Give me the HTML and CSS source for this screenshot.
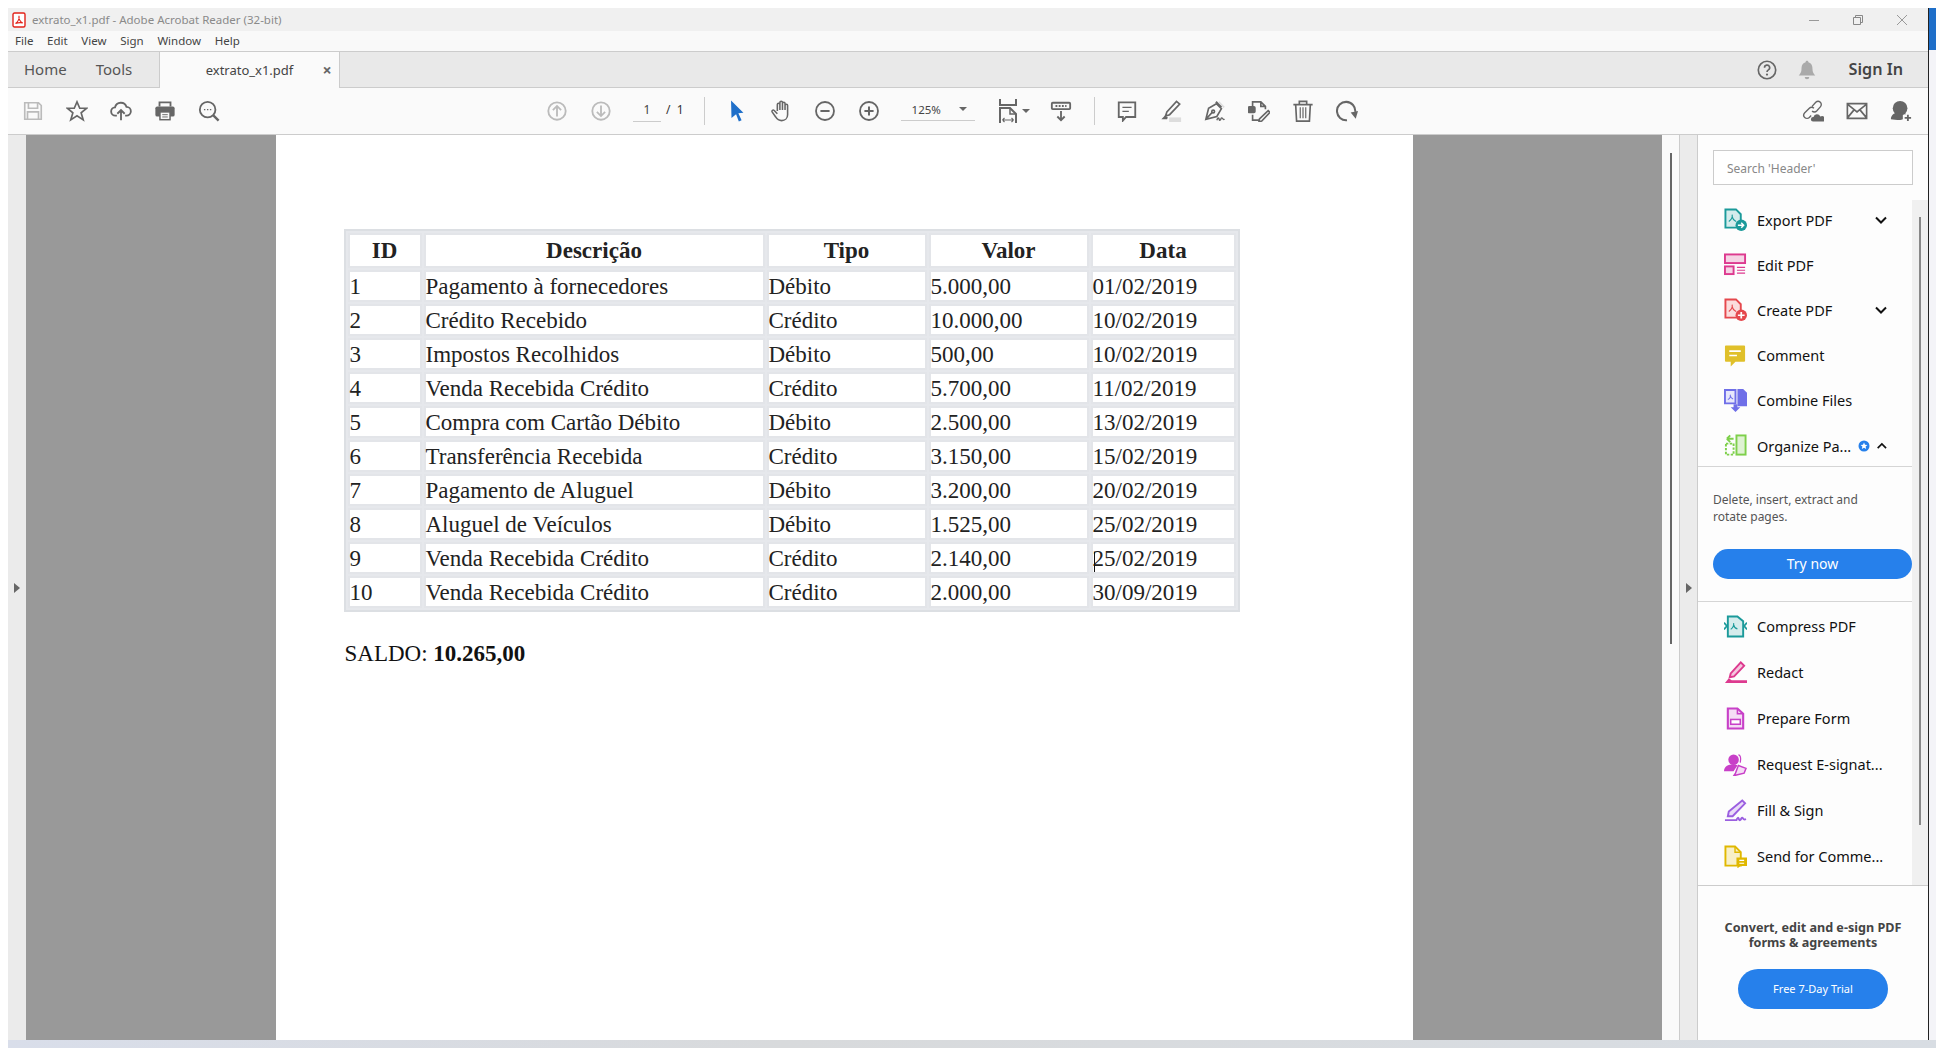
FILE: index.html
```html
<!DOCTYPE html>
<html lang="pt">
  <head>
    <meta charset="UTF-8" />
    <meta name="viewport" content="width=device-width, initial-scale=1.0" />
    <title>extrato_x1.pdf - Adobe Acrobat Reader</title>
    <link rel="stylesheet" href="styles.css">
  </head>
  <body>
    <div class="desk">
      <div class="window">
        <div class="titlebar">
          <svg class="app-icon" viewBox="0 0 14 16"><rect x="1" y="1" width="12" height="14" rx="1.5" fill="#fff" stroke="#e2231a" stroke-width="1.4"/><path d="M3.5 11.5C6 10 7.6 6.5 7 4c-.6 2.5 1 6 3.800 7-2-.6-4.800-.4-7.300.5z" fill="none" stroke="#e2231a" stroke-width="1.100"/></svg>
          <span class="title-text">extrato_x1.pdf - Adobe Acrobat Reader (32-bit)</span>
          <div class="win-btns">
            <svg viewBox="0 0 12 12"><path d="M1 6.500h10" stroke="#999" fill="none"/></svg>
            <svg viewBox="0 0 12 12"><path d="M1.500 3.500h7v7h-7zM3.500 3.500v-2h7v7h-2" stroke="#888" fill="none"/></svg>
            <svg viewBox="0 0 12 12"><path d="M1 1l10 10M11 1L1 11" stroke="#999" fill="none"/></svg>
          </div>
        </div>

        <div class="menubar">
          <span>File</span><span>Edit</span><span>View</span><span>Sign</span><span>Window</span><span>Help</span>
        </div>

        <div class="tabbar">
          <span class="tab-link home">Home</span>
          <span class="tab-link tools">Tools</span>
          <div class="tab-active">
            <span class="tab-name">extrato_x1.pdf</span>
            <span class="tab-close">×</span>
          </div>
          <div class="tab-right">
            <svg class="ico" viewBox="0 0 24 24"><circle cx="12" cy="12" r="9.500" fill="none" stroke="#666" stroke-width="1.800"/><path d="M9.300 9.500a2.800 2.800 0 1 1 4.200 2.400c-1 .6-1.500 1.100-1.500 2.300" fill="none" stroke="#666" stroke-width="1.800"/><circle cx="12" cy="17" r="1.200" fill="#666"/></svg>
            <svg class="ico bell" viewBox="0 0 24 24"><path d="M12 2c1 0 1.500.7 1.500 1.500C17 4.500 18 7.500 18 11c0 3 1 5 3 7H3c2-2 3-4 3-7 0-3.500 1-6.500 4.500-7.500C10.500 2.700 11 2 12 2zM9.500 19.500h5A2.500 2.500 0 0 1 9.500 19.500z" fill="#aaa"/></svg>
            <span class="sign-in">Sign In</span>
          </div>
        </div>

        <div class="toolbar">
          <span class="tool"><svg class="ico" viewBox="0 0 24 24" fill="none" stroke="#bbb" stroke-width="1.800"><path d="M3 3h15l3 3v15H3zM7 3v6h10V3M6 21v-8h12v8"/></svg></span>
          <span class="tool"><svg class="ico" viewBox="0 0 24 24" fill="none" stroke="#666" stroke-width="1.800"><path d="M12 2l3 7h7.500l-6 5 2.300 7.700L12 17.200l-6.800 4.500L7.500 14l-6-5H9z"/></svg></span>
          <span class="tool"><svg class="ico" viewBox="0 0 24 24" fill="none" stroke="#666" stroke-width="2"><path d="M7.500 17H6a4.500 4.500 0 0 1-.5-9A6.500 6.500 0 0 1 18 7.500a4.700 4.700 0 0 1 0 9.500h-1.500M12 22V11.500M8 15l4-4 4 4"/></svg></span>
          <span class="tool"><svg class="ico" viewBox="0 0 24 24"><path d="M6 7V2.500h12V7" fill="none" stroke="#666" stroke-width="2"/><rect x="1.500" y="7" width="21" height="11" rx="2" fill="#666"/><rect x="6.500" y="13" width="11" height="8.500" fill="#fafafa" stroke="#666" stroke-width="1.600"/><path d="M9 16h6M9 18.500h6" stroke="#666"/></svg></span>
          <span class="tool"><svg class="ico" viewBox="0 0 24 24" fill="none" stroke="#666" stroke-width="2"><circle cx="10.500" cy="10.500" r="8.500"/><path d="M16.500 16.500l6 6" stroke-width="2.600"/><path d="M6.500 10.500h1.500M9.800 10.500h1.500M13 10.500h1.500" stroke-width="1.600"/></svg></span>

          <span class="tool nav-first"><svg class="ico" viewBox="0 0 24 24" fill="none" stroke="#bbb" stroke-width="2"><circle cx="12" cy="12" r="9.500"/><path d="M12 18V6.500M7.500 11L12 6.500l4.500 4.500"/></svg></span>
          <span class="tool"><svg class="ico" viewBox="0 0 24 24" fill="none" stroke="#bbb" stroke-width="2"><circle cx="12" cy="12" r="9.500"/><path d="M12 6v11.500M7.500 13l4.500 4.500 4.500-4.500"/></svg></span>
          <span class="page-num">1</span>
          <span class="page-total">/ &nbsp;1</span>
          <span class="tool-sep first"></span>
          <span class="tool"><svg class="ico" viewBox="0 0 24 24"><path d="M5.500 0.500L19 14l-5.500.5L17 22l-3 1.500-3-8L6 19.500z" fill="#1f6fc9"/></svg></span>
          <span class="tool"><svg class="ico" viewBox="0 0 24 24" fill="none" stroke="#666" stroke-width="1.700"><path d="M8 12V5a1.400 1.400 0 0 1 2.800 0v6M10.800 11V2.800a1.400 1.400 0 0 1 2.800 0V11M13.600 11V3.800a1.400 1.400 0 0 1 2.800 0V11M16.400 11V6a1.400 1.400 0 0 1 2.800 0v10c0 4-3 6.500-6.500 6.500-3.200 0-5-1.500-6.500-4L2.300 13c-.8-1.300 1-2.800 2.300-1.600L8 15"/></svg></span>
          <span class="tool"><svg class="ico" viewBox="0 0 24 24" fill="none" stroke="#666" stroke-width="2"><circle cx="12" cy="12" r="9.800"/><path d="M7 12h10" stroke-width="2.200"/></svg></span>
          <span class="tool"><svg class="ico" viewBox="0 0 24 24" fill="none" stroke="#666" stroke-width="2"><circle cx="12" cy="12" r="9.800"/><path d="M7 12h10M12 7v10" stroke-width="2.200"/></svg></span>
          <span class="zoom-box"><span class="zoom-val">125%</span><span class="caret"></span></span>
          <span class="fit-tool">
            <svg class="fit-ico" viewBox="0 0 18 24" fill="none" stroke="#666" stroke-width="2"><path d="M1 0v6h16V0M1 24V9h10l6 6v9"/><path d="M11 9v6h6" stroke-width="1.500"/><path d="M3.500 21h11M3.500 21l2-2M3.500 21l2 2M14.500 21l-2-2M14.500 21l-2 2" stroke-width="1.100"/></svg>
            <span class="caret"></span>
          </span>
          <span class="tool dl-tool"><svg class="ico" viewBox="0 0 24 24" fill="none" stroke="#666" stroke-width="2"><rect x="2" y="3" width="20" height="7" rx="1"/><path d="M6 6.500h12" stroke-dasharray="2 1.500"/><path d="M12 12v10M8 18l4 4 4-4"/></svg></span>
          <span class="tool-sep"></span>
          <span class="tool"><svg class="ico" viewBox="0 0 24 24" fill="none" stroke="#666" stroke-width="2"><path d="M3 2.500h18v16H11l-3.500 4v-4H3z"/><path d="M7 8h10M7 12.500h7" stroke-width="1.400"/></svg></span>
          <span class="tool"><svg class="ico" viewBox="0 0 24 24"><path d="M21.500 4.500L18 1.500 7.500 13 6 17.500l4.500-1.500z" fill="none" stroke="#666" stroke-width="1.800"/><path d="M1.500 21l4-4 3 2.200-.8 1.800z" fill="#666"/><path d="M10 19h13v5H10z" fill="#ddd"/></svg></span>
          <span class="tool"><svg class="ico" viewBox="0 0 24 24" fill="none" stroke="#666" stroke-width="1.800"><path d="M13 2l6 6" stroke-width="2.200"/><path d="M13.500 4L5 9 2 21l12-3 5-8.500zM2.500 20.500L9 13.500"/><circle cx="10" cy="12.500" r="1.500"/><path d="M14 22c1-3 2-3 2.500-1s1.500 1 2-.5 1.500-1 2 0 1 1 2 .5" stroke-width="1.500"/><path d="M16 2l6 6" stroke="#ddd"/></svg></span>
          <span class="tool"><svg class="ico" viewBox="0 0 24 24" fill="none" stroke="#666" stroke-width="1.800"><path d="M5 7V2h9l5 5v3M14 2v5h5M5 16v6h7"/><rect x="0.500" y="7.500" width="7" height="6" rx="1" fill="#666"/><path d="M22 11.500l2 2L15 23l-3 .5.500-3z"/></svg></span>
          <span class="tool"><svg class="ico" viewBox="0 0 24 24" fill="none" stroke="#666" stroke-width="1.800"><path d="M1.500 5h21M8 5V1.500h8V5M4 5l1 18h14l1-18"/><path d="M9 8v12M12 8v12M15 8v12" stroke-width="1.300"/></svg></span>
          <span class="tool"><svg class="ico" viewBox="0 0 24 24" fill="none" stroke="#666" stroke-width="2.200"><path d="M12 22A10 10 0 1 1 21 13"/><path d="M16 13.500l5.500 7 2.500-8.500z" fill="#666" stroke="none"/></svg></span>
          <div class="tool-right">
            <span class="tool"><svg class="ico" viewBox="0 0 24 24" fill="none" stroke="#666" stroke-width="1.500"><path d="M11 7l4-4.500a3.500 3.500 0 0 1 5 5L16 12a3.500 3.500 0 0 1-5 0M13 9a3.500 3.500 0 0 0-5 0l-5 5a3.500 3.500 0 0 0 5 5l2-2"/><path d="M12 23.500a2.500 2.500 0 0 1 .5-5 4 4 0 0 1 7.500-.5 2.900 2.900 0 0 1 3.500 5.500z" fill="#666" stroke="none"/></svg></span>
            <span class="tool"><svg class="ico" viewBox="0 0 24 24" fill="none" stroke="#666" stroke-width="1.800"><path d="M1.500 4h21v16h-21zM1.500 4.500L12 13l10.500-8.500M1.500 19.500L9 10.500M22.500 19.500L15 10.500"/></svg></span>
            <span class="tool"><svg class="ico" viewBox="0 0 24 24"><circle cx="11" cy="9" r="8" fill="#666"/><path d="M1 21c0-4 3-6.500 6-7h8c1 .3 2 .8 2.500 1.500H14V21c-1 .5-2 .8-3 .8-4 0-7.500-.2-10-.8z" fill="#666"/><path d="M19.500 16v7M16 19.500h7" stroke="#666" stroke-width="2" fill="none"/></svg></span>
          </div>
        </div>

        <div class="main">
          <div class="side-strip"><span class="arrow-r"></span></div>
          <div class="doc-area">
            <div class="page">
              <table class="extrato">
                <thead>
                  <tr><th class="c-id">ID</th><th class="c-desc">Descrição</th><th class="c-tipo">Tipo</th><th class="c-valor">Valor</th><th class="c-data">Data</th></tr>
                </thead>
                <tbody>
                  <tr><td>1</td><td>Pagamento à fornecedores</td><td>Débito</td><td>5.000,00</td><td>01/02/2019</td></tr>
                  <tr><td>2</td><td>Crédito Recebido</td><td>Crédito</td><td>10.000,00</td><td>10/02/2019</td></tr>
                  <tr><td>3</td><td>Impostos Recolhidos</td><td>Débito</td><td>500,00</td><td>10/02/2019</td></tr>
                  <tr><td>4</td><td>Venda Recebida Crédito</td><td>Crédito</td><td>5.700,00</td><td>11/02/2019</td></tr>
                  <tr><td>5</td><td>Compra com Cartão Débito</td><td>Débito</td><td>2.500,00</td><td>13/02/2019</td></tr>
                  <tr><td>6</td><td>Transferência Recebida</td><td>Crédito</td><td>3.150,00</td><td>15/02/2019</td></tr>
                  <tr><td>7</td><td>Pagamento de Aluguel</td><td>Débito</td><td>3.200,00</td><td>20/02/2019</td></tr>
                  <tr><td>8</td><td>Aluguel de Veículos</td><td>Débito</td><td>1.525,00</td><td>25/02/2019</td></tr>
                  <tr><td>9</td><td>Venda Recebida Crédito</td><td>Crédito</td><td>2.140,00</td><td class="with-cursor"><span class="text-cursor"></span>25/02/2019</td></tr>
                  <tr><td>10</td><td>Venda Recebida Crédito</td><td>Crédito</td><td>2.000,00</td><td>30/09/2019</td></tr>
                </tbody>
              </table>
              <p class="saldo">SALDO: <b>10.265,00</b></p>
            </div>
          </div>
          <div class="doc-scroll"><span class="doc-thumb"></span></div>
          <div class="side-strip right"><span class="arrow-r"></span></div>

          <aside class="panel">
            <div class="panel-top">
              <div class="panel-list">
                <div class="search">Search 'Header'</div>
                <div class="item">
                  <svg class="p-ico" viewBox="0 0 24 24"><path d="M1.500 1.500h11l5 5v14h-16z" fill="#d5ecec" stroke="#1b9a9a" stroke-width="2"/><path d="M5 14c2.500-1.500 4-4.500 3.500-7M8.500 9c.5 2.500 2 4 4 5" fill="none" stroke="#1b9a9a" stroke-width="1.200"/><circle cx="18" cy="18" r="6" fill="#1b9a9a"/><path d="M14.500 18h6M18 15.500l2.500 2.500-2.500 2.500" fill="none" stroke="#fff" stroke-width="1.500"/></svg>
                  <span class="item-name">Export PDF</span>
                  <svg class="chev" viewBox="0 0 14 10"><path d="M2 2.500l5 5 5-5" fill="none" stroke="#111" stroke-width="2"/></svg>
                </div>
                <div class="item">
                  <svg class="p-ico" viewBox="0 0 24 24" fill="none" stroke="#dd3a8f" stroke-width="2"><rect x="1" y="1.500" width="21" height="9" fill="#f5d4e5"/><rect x="1" y="14" width="9" height="8" fill="#f5d4e5"/><path d="M13.500 15h8.500M13.500 18h8.500M13.500 21h8.500" stroke-width="1.200"/></svg>
                  <span class="item-name">Edit PDF</span>
                </div>
                <div class="item">
                  <svg class="p-ico" viewBox="0 0 24 24"><path d="M1.500 1.500h11l5 5v14h-16z" fill="#fbdddd" stroke="#e5484d" stroke-width="2"/><path d="M5 14c2.500-1.500 4-4.500 3.500-7M8.500 9c.5 2.500 2 4 4 5" fill="none" stroke="#e5484d" stroke-width="1.200"/><circle cx="18" cy="18" r="6" fill="#e5484d"/><path d="M14.500 18h7M18 14.500v7" fill="none" stroke="#fff" stroke-width="1.800"/></svg>
                  <span class="item-name">Create PDF</span>
                  <svg class="chev" viewBox="0 0 14 10"><path d="M2 2.500l5 5 5-5" fill="none" stroke="#111" stroke-width="2"/></svg>
                </div>
                <div class="item">
                  <svg class="p-ico" viewBox="0 0 24 24"><path d="M2 1.500h19a1 1 0 0 1 1 1v15a1 1 0 0 1-1 1H12l-5 5v-5H2a1 1 0 0 1-1-1v-15a1 1 0 0 1 1-1z" fill="#e0c02a"/><path d="M5.500 7.500h12M5.500 12h8" stroke="#fff" stroke-width="1.800"/></svg>
                  <span class="item-name">Comment</span>
                </div>
                <div class="item">
                  <svg class="p-ico" viewBox="0 0 24 24"><path d="M1 1h11v14H1z" fill="#e6e6fb" stroke="#6f6fe8" stroke-width="2"/><path d="M14 0h6l4 4v14H14z" fill="#6f6fe8"/><path d="M4 11c2-1 3-3 2.500-5M6.500 7c.5 2 1.500 3 3 3.500" fill="none" stroke="#6f6fe8" stroke-width="1.100"/><path d="M10 16h4v3h3l-5 5-5-5h3z" fill="#6f6fe8"/></svg>
                  <span class="item-name">Combine Files</span>
                </div>
                <div class="item">
                  <svg class="p-ico" viewBox="0 0 24 24"><rect x="13" y="1.500" width="9.500" height="20" fill="#dff2d3" stroke="#7ed04b" stroke-width="2"/><path d="M2 10h8v11.500H2z" fill="none" stroke="#7ed04b" stroke-width="2" stroke-dasharray="2.500 1.500"/><path d="M3 5h7M3 5l3.500-3.500M3 5l3.500 3.500" fill="none" stroke="#7ed04b" stroke-width="2"/></svg>
                  <span class="item-name">Organize Pa...</span>
                  <svg class="star-badge" viewBox="0 0 12 12"><circle cx="6" cy="6" r="5.500" fill="#2680eb"/><path d="M6 2.500l1 2.300 2.400.2-1.800 1.600.6 2.400L6 7.700 3.800 9l.6-2.400L2.600 5l2.400-.2z" fill="#fff"/></svg>
                  <svg class="chev up" viewBox="0 0 14 10"><path d="M2 7.500l5-5 5 5" fill="none" stroke="#111" stroke-width="2"/></svg>
                </div>
                <div class="expand">
                  <p class="expand-text">Delete, insert, extract and<br>rotate pages.</p>
                  <div class="try-btn">Try now</div>
                </div>
                <div class="item low">
                  <svg class="p-ico" viewBox="0 0 24 24"><path d="M4 1.500h10l6 5v16H4z" fill="#d5ecec" stroke="#1b9a9a" stroke-width="2"/><path d="M7 15c2-1.500 3.500-4 3-6.500M10 10c.5 2.500 2 4 4 4.500" fill="none" stroke="#1b9a9a" stroke-width="1.200"/><path d="M0 8l3 3.500L0 15M24 8l-3 3.500 3 3.500" fill="none" stroke="#1b9a9a" stroke-width="1.800"/></svg>
                  <span class="item-name">Compress PDF</span>
                </div>
                <div class="item low">
                  <svg class="p-ico" viewBox="0 0 24 24"><path d="M21 5L17.500 1.500 7 13l-1 4 4.500-1z" fill="#f5c6de" stroke="#dd3a8f" stroke-width="2"/><path d="M1 23l4-5 3 2h16v3z" fill="#dd3a8f"/></svg>
                  <span class="item-name">Redact</span>
                </div>
                <div class="item low">
                  <svg class="p-ico" viewBox="0 0 24 24"><path d="M4 1.500h10l6 5.500v15.500H4z" fill="#f5dcf5" stroke="#c840c8" stroke-width="2.200"/><path d="M14 1.500V7h6" fill="none" stroke="#c840c8" stroke-width="1.600"/><rect x="7" y="13" width="10" height="5" fill="#fff" stroke="#c840c8" stroke-width="1.600"/></svg>
                  <span class="item-name">Prepare Form</span>
                </div>
                <div class="item low">
                  <svg class="p-ico" viewBox="0 0 24 24"><circle cx="10" cy="7" r="5.500" fill="#c840c8"/><path d="M0 19c0-5 4-7 10-7 3 0 4 1 4 1l-4 6z" fill="#c840c8"/><path d="M23 16l-8-3-3 8-2 3 3-1 8-2z" fill="#f5dcf5" stroke="#c840c8" stroke-width="1.500"/><path d="M15 2c2 0 3 3 2 8" fill="none" stroke="#c840c8" stroke-width="1.300"/></svg>
                  <span class="item-name">Request E-signat...</span>
                </div>
                <div class="item low">
                  <svg class="p-ico" viewBox="0 0 24 24"><path d="M19 1.500l3 3L9 18H4l1-5z" fill="#eadcf8" stroke="#9b5fe0" stroke-width="2"/><path d="M1 22h12c1-3 2-3 2.500-1s2 1 2.500-.5 1.500-1 2 0 1.500 1 3 .5" fill="none" stroke="#9b5fe0" stroke-width="2"/></svg>
                  <span class="item-name">Fill &amp; Sign</span>
                </div>
                <div class="item low">
                  <svg class="p-ico" viewBox="0 0 24 24"><path d="M1.500 1.500h10l6 6v14h-16z" fill="#f8f0c8" stroke="#e0b800" stroke-width="2"/><path d="M11.500 1.500v6h6" fill="none" stroke="#e0b800" stroke-width="1.500"/><path d="M13 13h11v9h-7l-3 2.500V22h-1z" fill="#e0b800"/><path d="M16 16h5M16 19h5" stroke="#fff" stroke-width="1.200"/></svg>
                  <span class="item-name">Send for Comme...</span>
                </div>
              </div>
              <div class="panel-scroll"><span class="panel-thumb"></span></div>
            </div>
            <div class="promo">
              <p class="promo-text">Convert, edit and e-sign PDF<br>forms &amp; agreements</p>
              <div class="trial-btn">Free 7-Day Trial</div>
            </div>
          </aside>
        </div>
      </div>
      <div class="edge"><span class="edge-blue"></span></div>
    </div>
    <div class="taskbar"></div>
  </body>
</html>
```

FILE: styles.css
```css
* {
  box-sizing: border-box;
}
html, body {
  margin: 0;
  height: 100%;
  overflow: hidden;
}
body {
  background: #fff;
  font-family: "Noto Sans", "Open Sans", sans-serif;
  color: #333;
}
.desk {
  display: flex;
  padding: 8px 0 0 8px;
  height: 1040px;
}
.window {
  width: 1921px;
  display: flex;
  flex-direction: column;
  border-right: 1px solid #222;
  background: #fafafa;
}
.edge {
  flex: 1;
  background: #f4f4f8;
}
.edge-blue {
  display: block;
  height: 42px;
  background: #1f6fc9;
}
.taskbar {
  height: 8px;
  margin-left: 8px;
  background: linear-gradient(90deg, #d9deea, #d8dadc 40%, #d8dde3);
}

/* title + menu */
.titlebar {
  height: 23px;
  background: #f0f0f0;
  display: flex;
  align-items: center;
  padding-left: 4px;
  flex: none;
}
.app-icon {
  width: 14px;
  height: 16px;
}
.title-text {
  margin-left: 6px;
  font-size: 11.500px;
  color: #8a8a8a;
}
.win-btns {
  margin-left: auto;
  display: flex;
  gap: 32px;
  padding-right: 20px;
}
.win-btns svg {
  width: 12px;
  height: 12px;
}
.menubar {
  height: 20px;
  flex: none;
  display: flex;
  align-items: center;
  gap: 13.700px;
  padding: 0 0 2px 7px;
  font-size: 11.500px;
  color: #444;
  background: #f9f9f9;
}

/* tabs */
.tabbar {
  height: 37px;
  flex: none;
  display: flex;
  align-items: center;
  background: #e9e9e9;
  border-top: 1px solid #ccc;
  border-bottom: 1px solid #ccc;
  font-size: 15px;
}
.tab-link {
  color: #555;
  margin-bottom: 2px;
}
.home {
  margin-left: 16px;
}
.tools {
  margin-left: 29px;
}
.tab-active {
  margin-left: 26.500px;
  width: 181px;
  height: 36px;
  margin-bottom: -1px;
  background: #fafafa;
  border-left: 1px solid #ccc;
  border-right: 1px solid #ccc;
  display: flex;
  align-items: center;
  font-size: 13px;
}
.tab-name {
  margin-left: 46px;
  margin-bottom: 1px;
  color: #444;
}
.tab-close {
  margin-left: auto;
  margin-right: 7px;
  font-size: 16px;
  font-weight: 700;
  color: #666;
}
.tab-right {
  margin-left: auto;
  display: flex;
  align-items: center;
  padding-right: 25px;
}
.tab-right .ico {
  width: 22px;
  height: 22px;
}
.bell {
  margin-left: 18px;
}
.sign-in {
  margin-left: 31px;
  margin-bottom: 2px;
  font-weight: 600;
  color: #444;
  font-size: 16.200px;
}

/* toolbar */
.toolbar {
  height: 47px;
  flex: none;
  display: flex;
  align-items: center;
  padding-left: 3px;
  background: #fafafa;
  border-bottom: 1px solid #ccc;
}
.tool {
  width: 44px;
  display: flex;
  justify-content: center;
  flex: none;
}
.ico {
  width: 22px;
  height: 22px;
  display: block;
}
.fit-ico {
  width: 18px;
  height: 24px;
  display: block;
}
.nav-first {
  margin-left: 304px;
}
.page-num {
  width: 28px;
  margin-left: 10px;
  padding-bottom: 3px;
  border-bottom: 1px solid #ccc;
  text-align: center;
  font-size: 12px;
  color: #444;
}
.page-total {
  margin-left: 5px;
  font-size: 12px;
  color: #333;
  margin-bottom: 4px;
}
.tool-sep {
  width: 1px;
  height: 28px;
  background: #ccc;
  margin: 0 10px 0 11px;
}
.tool-sep.first {
  margin-left: 20px;
  margin-right: 10px;
}
.zoom-box {
  width: 74px;
  margin-left: 10px;
  padding: 0 0 3px 11px;
  border-bottom: 1px solid #ccc;
  display: flex;
  align-items: center;
  font-size: 11.500px;
  color: #444;
}
.zoom-val {
  width: 47px;
}
.caret {
  width: 0;
  height: 0;
  border-left: 4px solid transparent;
  border-right: 4px solid transparent;
  border-top: 4px solid #666;
}
.fit-tool {
  margin-left: 24px;
  display: flex;
  align-items: center;
  gap: 5px;
}
.dl-tool {
  margin-left: 9.500px;
}
.tool-right {
  margin-left: auto;
  display: flex;
  padding-right: 5px;
}

/* document */
.main {
  flex: 1;
  display: flex;
  min-height: 0;
}
.side-strip {
  width: 18px;
  flex: none;
  background: #ebebeb;
  display: flex;
  align-items: center;
  justify-content: center;
}
.side-strip.right {
  border-left: 1px solid #ccc;
  border-right: 1px solid #ccc;
  width: 19px;
}
.arrow-r {
  width: 0;
  height: 0;
  border-top: 5px solid transparent;
  border-bottom: 5px solid transparent;
  border-left: 6px solid #666;
}
.doc-area {
  width: 1636px;
  flex: none;
  background: #999;
  display: flex;
  justify-content: center;
}
.page {
  width: 1137px;
  height: 100%;
  background: #fff;
  padding: 94px 0 0 68px;
  font-family: "Liberation Serif", serif;
  color: #222;
}
.extrato {
  border: 2px solid #dcdfe3;
  border-spacing: 2px;
  background: #e6e8ec;
  font-size: 23px;
  table-layout: fixed;
  width: 896px;
}
.extrato th,
.extrato td {
  border: 2px solid #e3e5e9;
  background: #fff;
  padding: 1px 0 0;
  height: 32px;
  line-height: 26px;
  font-weight: 400;
  text-align: left;
}
.extrato th {
  height: 35px;
  font-weight: 700;
  text-align: center;
}
.c-id {
  width: 74px;
}
.c-desc {
  width: 341px;
}
.c-tipo {
  width: 160px;
}
.c-valor {
  width: 160px;
}
.c-data {
  width: 145px;
}
.with-cursor {
  position: relative;
}
.text-cursor {
  position: absolute;
  left: 1px;
  top: 8px;
  width: 1px;
  height: 20px;
  background: #111;
}
.saldo {
  margin: 29px 0 0 1px;
  font-size: 23px;
  color: #111;
}
.doc-scroll {
  width: 17px;
  flex: none;
  background: #fafafa;
  padding: 18px 0 0 8px;
}
.doc-thumb {
  display: block;
  width: 2px;
  height: 491px;
  background: #666;
}

/* tools panel */
.panel {
  flex: 1;
  min-width: 0;
  display: flex;
  flex-direction: column;
  background: #fdfdfd;
}
.panel-top {
  height: 750px;
  flex: none;
  display: flex;
}
.panel-list {
  width: 214px;
  flex: none;
  padding: 15px 0 0 15px;
}
.panel-scroll {
  flex: 1;
  margin-top: 65px;
  background: #f0f0f0;
  padding: 17px 0 0 7px;
}
.panel-thumb {
  display: block;
  width: 2px;
  height: 608px;
  background: #888;
}
.search {
  width: 200px;
  height: 35px;
  border: 1px solid #ccc;
  background: #fff;
  padding-left: 13px;
  font-size: 12px;
  line-height: 35px;
  color: #888;
  margin-bottom: 12px;
}
.item {
  height: 45.200px;
  display: flex;
  align-items: center;
  padding-left: 11px;
  font-size: 14.500px;
  color: #111;
}
.item.low {
  height: 46px;
}
.p-ico {
  width: 23px;
  height: 23px;
  flex: none;
}
.item-name {
  margin-left: 10px;
  white-space: nowrap;
}
.chev {
  width: 14px;
  height: 10px;
  margin-left: auto;
  margin-right: 24px;
}
.star-badge {
  width: 12px;
  height: 12px;
  margin-left: 7px;
  flex: none;
}
.chev.up {
  margin-left: 6px;
}
.expand {
  margin: -2px 0 1px -15px;
  padding: 24px 0 22px 15px;
  border-top: 1px solid #d5d5d5;
  border-bottom: 1px solid #d5d5d5;
}
.expand-text {
  margin: 0;
  font-size: 12px;
  line-height: 17px;
  color: #555;
}
.try-btn {
  margin-top: 24px;
  width: 199px;
  height: 30px;
  border-radius: 15px;
  background: #2680eb;
  color: #fff;
  font-size: 14px;
  line-height: 30px;
  text-align: center;
}
.promo {
  flex: 1;
  border-top: 1px solid #ccc;
  padding-top: 34px;
  text-align: center;
}
.promo-text {
  margin: 0;
  font-size: 12.600px;
  font-weight: 700;
  line-height: 15px;
  color: #444;
}
.trial-btn {
  margin: 19px auto 0;
  width: 150px;
  height: 40px;
  border-radius: 20px;
  background: #2680eb;
  color: #fff;
  font-size: 11px;
  line-height: 40px;
}
```
